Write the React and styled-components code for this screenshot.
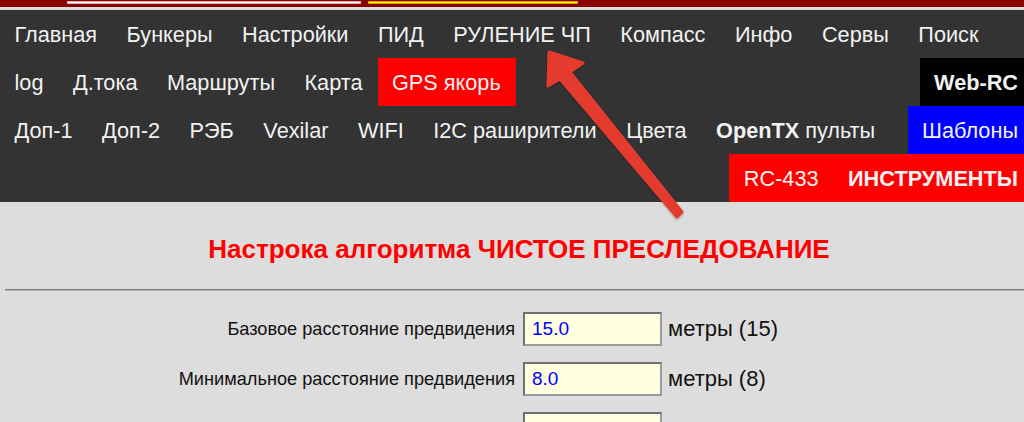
import React from "react";
import styled, { createGlobalStyle } from "styled-components";

const Global = createGlobalStyle`
  html, body { margin: 0; padding: 0; background: #dddddd; overflow: hidden; }
  body { font-family: "Liberation Sans", Arial, sans-serif; }
  * { box-sizing: border-box; }
`;

const Page = styled.div`
  position: relative;
  width: 1033px;
  height: 422px;
  overflow: hidden;
  background: #dddddd;
`;

const TopStrip = styled.div`
  height: 7px;
  background: #8b0000;
  display: flex;
  gap: 7px;
  padding: 1px 0 0 67px;
`;

const Indicator = styled.div`
  width: ${(p) => p.$w}px;
  height: 3px;
  background: ${(p) => p.$color};
  border: 1px solid ${(p) => p.$edge};
`;

const Gap = styled.div`
  height: 3px;
  background: #dddddd;
`;

const Nav = styled.nav`
  background: #333333;
  display: flex;
  flex-direction: column;
`;

const NavRow = styled.div`
  display: flex;
  height: 48px;
  align-items: stretch;
`;

const Group = styled.div`
  display: flex;
  margin-left: auto;
  background: ${(p) => p.$bg || "transparent"};
`;

const NavLink = styled.a`
  display: flex;
  align-items: center;
  padding: 1px 15px 0 14.5px;
  color: #f2f2f2;
  font-size: 21.7px;
  font-weight: ${(p) => (p.$bold ? 700 : 400)};
  background: ${(p) => p.$bg || "transparent"};
  text-decoration: none;
  white-space: pre;
  ${(p) => (p.$right ? "margin-left: auto;" : "")}
  b { font-weight: 700; }
`;

const Main = styled.main`
  padding: 0 0 0 5px;
`;

const Title = styled.h2`
  margin: 32px 0 0;
  text-align: center;
  color: #ff0000;
  font-size: 26px;
  font-weight: 700;
  line-height: 30px;
`;

const Rule = styled.hr`
  margin: 25px 0 21px;
  height: 0;
  border: none;
  border-top: 1px solid #7d7d7d;
  border-bottom: 1px solid #b5b5b5;
`;

const Form = styled.div`
  display: grid;
  grid-template-columns: 1fr 1fr;
  column-gap: 8px;
  row-gap: 16px;
`;

const Label = styled.label`
  justify-self: end;
  align-self: center;
  font-size: 18.2px;
  color: #111;
`;

const Field = styled.div`
  display: flex;
  align-items: center;
  gap: 6px;
`;

const Input = styled.input`
  width: 139px;
  height: 34px;
  padding: 0 0 0 7px;
  background: #ffffe0;
  border: 2px solid;
  border-color: #6f6f74 #9a9a9e #9a9a9e #6f6f74;
  color: #0000ff;
  font-family: "Liberation Sans", Arial, sans-serif;
  font-size: 19px;
  outline: none;
`;

const Unit = styled.span`
  font-size: 22px;
  color: #111;
`;

const Overlay = styled.svg`
  position: absolute;
  left: 0;
  top: 0;
  pointer-events: none;
`;

const Arrow = () => (
  <Overlay width="1033" height="422" viewBox="0 0 1033 422">
    <defs>
      <filter id="sh" x="-20%" y="-20%" width="140%" height="140%">
        <feDropShadow dx="0" dy="1" stdDeviation="1" floodColor="#000" floodOpacity="0.35" />
      </filter>
    </defs>
    <polygon
      filter="url(#sh)"
      points="549,52 583,63 570,72 682,212 677,217 560,79 548,86"
      fill="#e53b2f"
      stroke="#e53b2f"
      strokeWidth="3"
      strokeLinejoin="round"
    />
  </Overlay>
);

const rows = [
  { label: "Базовое расстояние предвидения", value: "15.0", unit: "метры (15)" },
  { label: "Минимальное расстояние предвидения", value: "8.0", unit: "метры (8)" },
  { label: "", value: "", unit: "" },
];

export default function App() {
  return (
    <Page>
      <Global />
      <TopStrip>
        <Indicator $w={294} $color="#ffffff" $edge="#d8b4b4" />
        <Indicator $w={210} $color="#ffff00" $edge="#d6a000" />
      </TopStrip>
      <Gap />
      <Nav>
        <NavRow>
          <NavLink>Главная</NavLink>
          <NavLink>Бункеры</NavLink>
          <NavLink>Настройки</NavLink>
          <NavLink>ПИД</NavLink>
          <NavLink>РУЛЕНИЕ ЧП</NavLink>
          <NavLink>Компасс</NavLink>
          <NavLink>Инфо</NavLink>
          <NavLink>Сервы</NavLink>
          <NavLink>Поиск</NavLink>
        </NavRow>
        <NavRow>
          <NavLink>log</NavLink>
          <NavLink>Д.тока</NavLink>
          <NavLink>Маршруты</NavLink>
          <NavLink>Карта</NavLink>
          <NavLink $bg="#ff0000">GPS якорь</NavLink>
          <NavLink $right $bold $bg="#000000">Web-RC</NavLink>
        </NavRow>
        <NavRow>
          <NavLink>Доп-1</NavLink>
          <NavLink>Доп-2</NavLink>
          <NavLink>РЭБ</NavLink>
          <NavLink>Vexilar</NavLink>
          <NavLink>WIFI</NavLink>
          <NavLink>I2C раширители</NavLink>
          <NavLink>Цвета</NavLink>
          <NavLink>
            <b>OpenTX</b> пульты
          </NavLink>
          <NavLink $right $bg="#0000ff">Шаблоны</NavLink>
        </NavRow>
        <NavRow>
          <Group $bg="#ff0000">
            <NavLink>RC-433</NavLink>
            <NavLink $bold>ИНСТРУМЕНТЫ</NavLink>
          </Group>
        </NavRow>
      </Nav>
      <Main>
        <Title>Настрока алгоритма ЧИСТОЕ ПРЕСЛЕДОВАНИЕ</Title>
        <Rule />
        <Form>
          {rows.map((r, i) => (
            <React.Fragment key={i}>
              <Label>{r.label}</Label>
              <Field>
                <Input defaultValue={r.value} />
                <Unit>{r.unit}</Unit>
              </Field>
            </React.Fragment>
          ))}
        </Form>
      </Main>
      <Arrow />
    </Page>
  );
}
